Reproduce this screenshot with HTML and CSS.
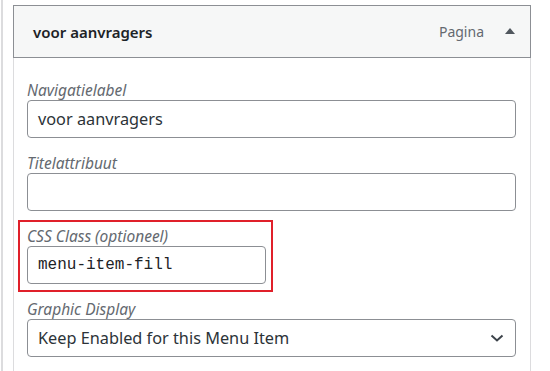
FILE: index.html
```html
<!DOCTYPE html>
<html>
<head>
<meta charset="utf-8">
<link rel="stylesheet" href="styles.css">
</head>
<body>
<div class="page">
  <div class="item">
    <div class="item-head">
      <span class="item-title">voor aanvragers</span>
      <span class="item-controls">
        <span class="item-type">Pagina</span>
        <span class="toggle"></span>
      </span>
    </div>
    <div class="item-body">
      <div class="field">
        <label class="lbl">Navigatielabel</label>
        <div class="input">voor aanvragers</div>
      </div>
      <div class="field">
        <label class="lbl">Titelattribuut</label>
        <div class="input"></div>
      </div>
      <div class="highlight">
        <label class="lbl">CSS Class (optioneel)</label>
        <div class="input mono">menu-item-fill</div>
      </div>
      <div class="field field-select">
        <label class="lbl">Graphic Display</label>
        <div class="input select">
          <span>Keep Enabled for this Menu Item</span>
          <svg class="chev" width="14" height="8" viewBox="0 0 14 8"><path d="M1.5 1.5 L7 6.5 L12.5 1.5" fill="none" stroke="#3c434a" stroke-width="2"/></svg>
        </div>
      </div>
    </div>
  </div>
</div>
</body>
</html>
```

FILE: styles.css
```css
html, body {
  margin: 0;
  padding: 0;
  background: #ffffff;
}
body {
  font-family: "Noto Sans", "Open Sans", sans-serif;
  color: #2c3338;
  width: 550px;
  height: 371px;
  overflow: hidden;
}
.page {
  margin-left: 1px;
  border-left: 2px solid #dcdcde;
  padding: 5px 0 0 10px;
  height: 366px;
}
.item {
  width: 518px;
  box-sizing: border-box;
}
.item-head {
  height: 53px;
  box-sizing: border-box;
  border: 1px solid #8c8f94;
  background: #f6f7f7;
  display: flex;
  align-items: center;
  justify-content: space-between;
  padding: 0 15px 0 19px;
}
.item-title {
  font-size: 15px;
  font-weight: 600;
  color: #1d2327;
}
.item-controls {
  display: flex;
  align-items: center;
  gap: 21px;
}
.item-type {
  font-size: 14px;
  color: #646970;
}
.toggle {
  width: 0;
  height: 0;
  border-left: 5px solid transparent;
  border-right: 5px solid transparent;
  border-bottom: 6px solid #50575e;
  margin-top: -2px;
}
.item-body {
  border-left: 1px solid #dcdcde;
  border-right: 1px solid #dcdcde;
  padding: 22px 14px 0 13px;
  height: 313px;
  box-sizing: border-box;
  overflow: hidden;
}
.field {
  margin-bottom: 15px;
}
.lbl {
  display: block;
  font-size: 15.5px;
  font-style: italic;
  color: #646970;
  line-height: 20px;
}
.input {
  height: 38px;
  box-sizing: border-box;
  border: 1px solid #8c8f94;
  border-radius: 4px;
  background: #fff;
  padding: 0 10px;
  display: flex;
  align-items: center;
  font-size: 16.3px;
  color: #2c3338;
}
.mono {
  font-family: "Liberation Mono", monospace;
  font-size: 16px;
  color: #1d2327;
}
.highlight {
  margin: -6px 0 0 -9px;
  width: 255px;
  box-sizing: border-box;
  border: 2px solid #e0202a;
  padding: 4px 5px 6px 7px;
}
.field-select {
  margin-top: 7px;
}
.select {
  justify-content: space-between;
  padding-right: 11px;
}
.chev {
  display: block;
}
```
